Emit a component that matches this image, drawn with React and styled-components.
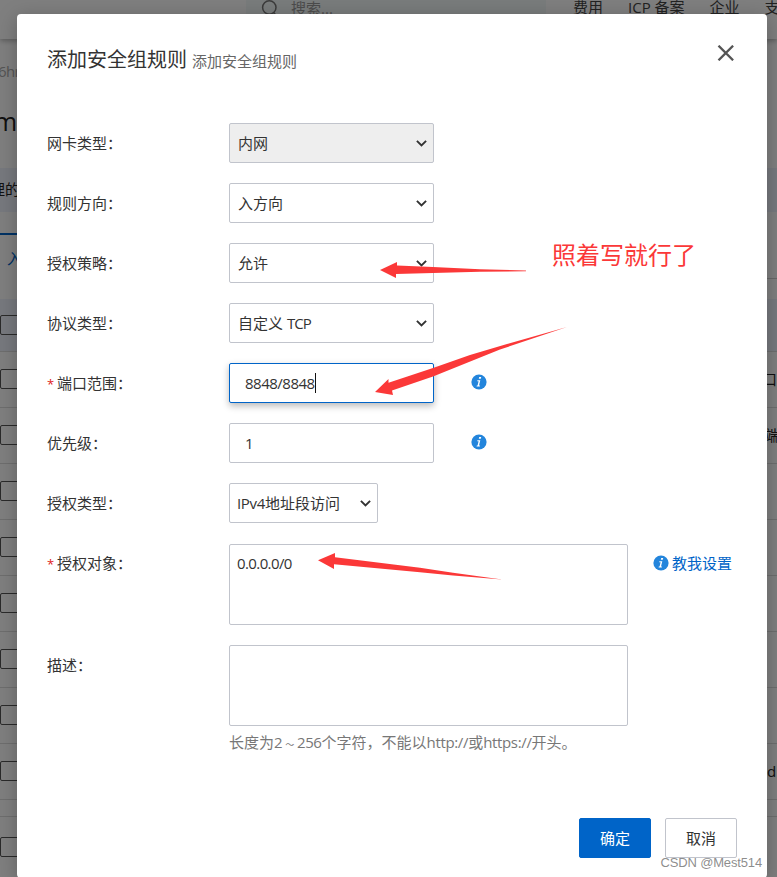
import React from "react";
import styled, { createGlobalStyle, css } from "styled-components";

const sans = `"Open Sans", "Noto Sans CJK SC", sans-serif`;

const GlobalStyle = createGlobalStyle`
  * { box-sizing: border-box; }
  html, body { margin: 0; height: 877px; overflow: hidden; background: #fff; }
  body { font-family: ${sans}; font-size: 15px; line-height: 20px; color: #333; }
`;

const Screen = styled.div`
  position: relative;
  width: 777px;
  height: 877px;
  overflow: hidden;
  background: #fff;
`;

/* ---- console page behind the dialog ---- */
const Console = styled.div`
  display: flex;
  flex-direction: column;
  height: 877px;
  white-space: nowrap;
`;

const TopBar = styled.header`
  display: flex;
  flex: none;
  height: 39px;
  padding-left: 246px;
  background: #fff;
  box-shadow: 0 2px 5px rgba(0, 0, 0, 0.28);
`;

const Search = styled.div`
  display: flex;
  flex: none;
  gap: 13px;
  width: 300px;
  height: 28px;
  padding-left: 15px;
  background: #f3f8f8;
  color: #999;
  line-height: 16px;
`;

const Nav = styled.nav`
  display: flex;
  gap: 25px;
  padding-left: 27px;
  line-height: 15px;
  color: #444;

  span { flex: none; }
`;

const Crumb = styled.div`
  flex: none;
  height: 69px;
  padding-top: 22px;
  text-indent: -2px;
  letter-spacing: -0.6px;
  color: #aaa;
`;

const Heading = styled.div`
  flex: none;
  height: 60px;
  margin-left: -6px;
  font-size: 25px;
  line-height: 26px;
  color: #222;
`;

const Notice = styled.div`
  flex: none;
  height: 44px;
  padding-top: 11px;
  margin-bottom: 21px;
  text-indent: -10px;
  background: #eff3fd;
  color: #222;
`;

const TabStrip = styled.div`
  display: flex;
  flex: none;
  height: 46px;
  margin-bottom: 20px;
`;

const ActiveTab = styled.div`
  width: 120px;
  padding: 13px 7px;
  border-top: 2px solid #0064c8;
  color: #0064c8;
`;

const TabRest = styled.div`
  flex: 1;
  border-bottom: 1px solid #d0d0d0;
`;

const TableRow = styled.div`
  display: flex;
  flex: none;
  justify-content: space-between;
  align-items: center;
  height: ${(p) => p.$height || 56}px;
  padding-bottom: ${(p) => (p.$height ? 0 : 2)}px;
  border-bottom: 1px solid #dcdcdc;
  background: ${(p) => (p.$header ? "#eff3fd" : "#fff")};
  color: #222;
`;

const Check = styled.span`
  width: 20px;
  height: 20px;
  border: 1px solid #555;
  border-radius: 2px;
`;

const EdgeCell = styled.span`
  width: ${(p) => p.$width || 15}px;
`;

/* ---- dialog ---- */
const Backdrop = styled.div`
  position: absolute;
  inset: 0;
  padding: 14px 10px 0 17px;
  background: rgba(0, 0, 0, 0.5);
`;

const Dialog = styled.section`
  display: flex;
  flex-direction: column;
  height: 864px;
  padding: 27px 30px 20px;
  border-radius: 4px;
  background: #fff;
  box-shadow: 0 4px 20px rgba(0, 0, 0, 0.25);
`;

const DialogHead = styled.header`
  display: flex;
  flex: none;
  justify-content: space-between;
  align-items: flex-start;
  height: 82px;
`;

const Title = styled.h1`
  margin: 4px 0 0;
  font-size: 20px;
  font-weight: 400;
  line-height: 30px;

  small {
    margin-left: 5px;
    font-size: 15px;
    color: #666;
  }
`;

const CloseButton = styled.button`
  display: flex;
  margin-top: 4px;
  padding: 0;
  border: 0;
  background: none;
`;

const Form = styled.div`
  display: flex;
  flex-direction: column;
  gap: 20px;
`;

const Row = styled.div`
  display: grid;
  grid-template-columns: 182px auto 1fr;
  grid-template-rows: ${(p) => p.$height || 40}px;
  align-items: start;
  margin-top: ${(p) => p.$offset || 0}px;
`;

const Label = styled.div`
  height: 40px;
  line-height: ${(p) => p.$line || 40}px;
`;

const Star = styled.span`
  display: inline-block;
  width: 10px;
  font-size: 13px;
  line-height: 20px;
  color: #e02020;
`;

const box = css`
  border: 1px solid #c1c4cc;
  border-radius: 2px;
  background: #fff;
`;

const SelectBox = styled.div`
  ${box}
  display: flex;
  align-items: center;
  justify-content: space-between;
  width: ${(p) => p.$width || 205}px;
  height: 40px;
  padding: 0 6px 0 ${(p) => p.$inset || 8}px;
  ${(p) => p.$disabled && "background: #eee;"}
`;

const InputBox = styled.div`
  ${box}
  display: flex;
  align-items: center;
  width: 205px;
  height: 40px;
  padding-left: 15px;
  letter-spacing: -0.5px;
  ${(p) =>
    p.$focused &&
    "border-color: #0064c8; box-shadow: 0 3px 7px rgba(0, 0, 0, 0.28);"}
`;

const Caret = styled.span`
  width: 1px;
  height: 20px;
  background: #111;
`;

const TextBox = styled.div`
  ${box}
  width: 399px;
  height: 81px;
  padding: 8px 7px;
  letter-spacing: -0.6px;
`;

const Help = styled.div`
  display: flex;
  align-items: center;
  gap: 3px;
  height: 21px;
  margin: 8px 0 0 ${(p) => p.$left || 37}px;
  color: #0064c8;
`;

const Hint = styled.p`
  margin: 6px 0 0;
  color: #777;
`;

const Latin = styled.span`
  letter-spacing: ${(p) => p.$tracking || -0.35}px;
`;

const Tilde = styled.span`
  margin: 0 3px;
  font-size: 9px;
  line-height: 1;
`;

const Actions = styled.footer`
  display: flex;
  justify-content: flex-end;
  gap: 14px;
  margin-top: auto;
`;

const Button = styled.button`
  width: 72px;
  height: 40px;
  padding: 0;
  border: 1px solid ${(p) => (p.$primary ? "#0064c8" : "#c1c4cc")};
  border-radius: 2px;
  background: ${(p) => (p.$primary ? "#0064c8" : "#fff")};
  color: ${(p) => (p.$primary ? "#fff" : "#333")};
  font: 15px/20px ${sans};
`;

/* ---- annotations ---- */
const Arrows = styled.svg`
  position: absolute;
  inset: 0;
`;

const Remark = styled.div`
  position: absolute;
  left: 552px;
  top: 239px;
  font-size: 24px;
  line-height: 32px;
  color: #fb3838;
`;

const Watermark = styled.div`
  position: absolute;
  right: 15px;
  bottom: 6px;
  font: 13px/16px "Liberation Sans", sans-serif;
  letter-spacing: -0.15px;
  color: rgba(120, 120, 120, 0.85);
`;

const Chevron = () => (
  <svg width="12" height="8" viewBox="0 0 12 8" fill="none">
    <path d="M1.9 1.9 6.500 6.500l4.600-4.600" stroke="#333" strokeWidth="1.9" />
  </svg>
);

const InfoIcon = () => (
  <svg width="16" height="16" viewBox="0 0 16 16">
    <circle cx="8" cy="8" r="7.6" fill="#2385dc" />
    <path
      d="M8.2 3h2l-.4 1.8h-2zM6.4 6.2h2.900L8 11.500h1.100l-.3 1H5.600l.2-1h.8l1-4.200h-1.400z"
      fill="#fff"
    />
  </svg>
);

const Select = ({ children, ...rest }) => (
  <SelectBox {...rest}>
    <span>{children}</span>
    <Chevron />
  </SelectBox>
);

const edgeTexts = [
  { text: "口", width: 15 },
  { text: "端", width: 12 },
  {}, {}, {}, {}, {},
  { text: "d", width: 10 },
];

export default function App() {
  return (
    <Screen>
      <GlobalStyle />
      <Console>
        <TopBar>
          <Search>
            <svg width="17" height="17" viewBox="0 0 17 17" fill="none" stroke="#777" strokeWidth="1.5">
              <circle cx="8.3" cy="7.5" r="6.7" />
              <path d="m12.5 12.5 3.7 4" />
            </svg>
            搜索...
          </Search>
          <Nav>
            <span>费用</span>
            <span>ICP 备案</span>
            <span>企业</span>
            <span>支</span>
          </Nav>
        </TopBar>
        <Crumb>6hr</Crumb>
        <Heading>m</Heading>
        <Notice>理的</Notice>
        <TabStrip>
          <ActiveTab>入方向</ActiveTab>
          <TabRest />
        </TabStrip>
        <TableRow $header $height={53}>
          <Check />
        </TableRow>
        {edgeTexts.map((cell, i) => (
          <TableRow key={i}>
            <Check />
            {cell.text && <EdgeCell $width={cell.width}>{cell.text}</EdgeCell>}
          </TableRow>
        ))}
        <TableRow $height={17} />
        <TableRow $height={61}>
          <Check />
        </TableRow>
      </Console>

      <Backdrop>
        <Dialog>
          <DialogHead>
            <Title>
              添加安全组规则<small>添加安全组规则</small>
            </Title>
            <CloseButton aria-label="关闭">
              <svg width="22" height="16" viewBox="0 0 22 16" stroke="#555" strokeWidth="2.3">
                <path d="m3.500.7 14.600 14.600M18.100.7 3.500 15.300" />
              </svg>
            </CloseButton>
          </DialogHead>

          <Form>
            <Row>
              <Label>网卡类型：</Label>
              <Select $disabled>内网</Select>
            </Row>
            <Row>
              <Label>规则方向：</Label>
              <Select>入方向</Select>
            </Row>
            <Row>
              <Label>授权策略：</Label>
              <Select>允许</Select>
            </Row>
            <Row>
              <Label>协议类型：</Label>
              <Select>
                自定义 <Latin $tracking={-0.9}>TCP</Latin>
              </Select>
            </Row>
            <Row>
              <Label><Star>*</Star>端口范围：</Label>
              <InputBox $focused>
                8848/8848
                <Caret />
              </InputBox>
              <Help><InfoIcon /></Help>
            </Row>
            <Row>
              <Label>优先级：</Label>
              <InputBox>1</InputBox>
              <Help><InfoIcon /></Help>
            </Row>
            <Row>
              <Label>授权类型：</Label>
              <Select $width={149} $inset={7}>
                <Latin>IPv4</Latin>地址段访问
              </Select>
            </Row>
            <Row $offset={1} $height={81}>
              <Label $line={38}><Star>*</Star>授权对象：</Label>
              <TextBox>0.0.0.0/0</TextBox>
              <Help $left={25}>
                <InfoIcon />
                教我设置
              </Help>
            </Row>
            <Row $height={107}>
              <Label>描述：</Label>
              <div>
                <TextBox />
                <Hint>
                  长度为<Latin>2<Tilde>～</Tilde>256</Latin>个字符，不能以<Latin>http://</Latin>或
                  <Latin>https://</Latin>开头。
                </Hint>
              </div>
            </Row>
          </Form>

          <Actions>
            <Button $primary>确定</Button>
            <Button>取消</Button>
          </Actions>
        </Dialog>
      </Backdrop>

      <Arrows width="777" height="877" fill="#fb3838">
        <path d="M380 270 397 262V265.5L433 267 480 269.2 526 270.5V271.300L480 271.700 433 273 396 274V278Z" />
        <path d="M375 392 388.500 379V382.700L433 368 470 355 507 344 567 327 500 349.500 433 376.500 392 390.500 393 395Z" />
        <path d="M318 560.300 335 553V557.200L420 567.700 453 572.700 502 579.500 453 575.500 420 572.300 334 564.300V569Z" />
      </Arrows>
      <Remark>照着写就行了</Remark>
      <Watermark>CSDN @Mest514</Watermark>
    </Screen>
  );
}
